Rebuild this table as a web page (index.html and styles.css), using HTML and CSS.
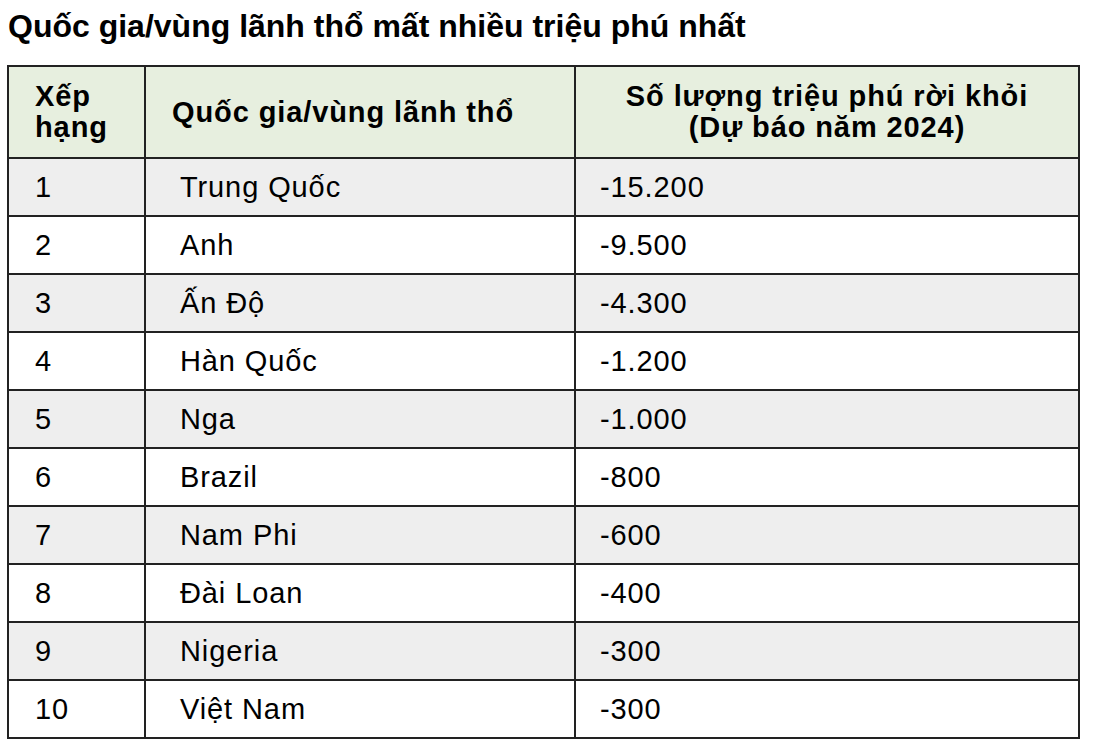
FILE: index.html
```html
<!DOCTYPE html>
<html lang="vi">
<head>
<meta charset="utf-8">
<link rel="stylesheet" href="styles.css">
</head>
<body>
<h1 class="title">Quốc gia/vùng lãnh thổ mất nhiều triệu phú nhất</h1>
<table class="tbl">
  <colgroup>
    <col class="c1"><col class="c2"><col class="c3">
  </colgroup>
  <thead>
    <tr class="head">
      <th class="h-rank">Xếp<br>hạng</th>
      <th class="h-country">Quốc gia/vùng lãnh thổ</th>
      <th class="h-num">Số lượng triệu phú rời khỏi<br>(Dự báo năm 2024)</th>
    </tr>
  </thead>
  <tbody>
    <tr class="odd"><td class="rank">1</td><td class="country">Trung Quốc</td><td class="num">-15.200</td></tr>
    <tr><td class="rank">2</td><td class="country">Anh</td><td class="num">-9.500</td></tr>
    <tr class="odd"><td class="rank">3</td><td class="country">Ấn Độ</td><td class="num">-4.300</td></tr>
    <tr><td class="rank">4</td><td class="country">Hàn Quốc</td><td class="num">-1.200</td></tr>
    <tr class="odd"><td class="rank">5</td><td class="country">Nga</td><td class="num">-1.000</td></tr>
    <tr><td class="rank">6</td><td class="country">Brazil</td><td class="num">-800</td></tr>
    <tr class="odd"><td class="rank">7</td><td class="country">Nam Phi</td><td class="num">-600</td></tr>
    <tr><td class="rank">8</td><td class="country">Đài Loan</td><td class="num">-400</td></tr>
    <tr class="odd"><td class="rank">9</td><td class="country">Nigeria</td><td class="num">-300</td></tr>
    <tr><td class="rank">10</td><td class="country">Việt Nam</td><td class="num">-300</td></tr>
  </tbody>
</table>
</body>
</html>
```
FILE: styles.css
```css
html, body {
  margin: 0;
  padding: 0;
  background: #ffffff;
}
body {
  font-family: "Liberation Sans", Arial, sans-serif;
  color: #000;
}
.title {
  margin: 0;
  padding: 7px 0 0 8px;
  font-size: 32px;
  font-weight: bold;
  line-height: 38px;
  height: 65px;
  box-sizing: border-box;
}
.tbl {
  margin-left: 7px;
  width: 1071px;
  border-collapse: collapse;
  table-layout: fixed;
}
.c1 { width: 137px; }
.c2 { width: 430px; }
.c3 { width: 504px; }
.tbl th, .tbl td {
  border: 2px solid #222;
  padding: 0;
  vertical-align: middle;
}
.tbl .head {
  background: #e7efdf;
  height: 92px;
}
.tbl .head th {
  font-size: 29px;
  font-weight: bold;
  line-height: 31px;
  letter-spacing: 0.9px;
}
.tbl .h-rank {
  text-align: left;
  padding-left: 26px;
  line-height: 29px;
}
.tbl .h-country {
  text-align: left;
  padding-left: 26px;
}
.tbl .h-num {
  text-align: center;
}
.tbl tbody tr {
  height: 58px;
}
.tbl tbody tr.odd {
  background: #eeeeee;
}
.tbl td {
  font-size: 29px;
  line-height: 34px;
  letter-spacing: 0.9px;
}
.tbl .rank { padding-left: 26px; }
.tbl .country { padding-left: 34px; }
.tbl .num { padding-left: 24px; }
```
